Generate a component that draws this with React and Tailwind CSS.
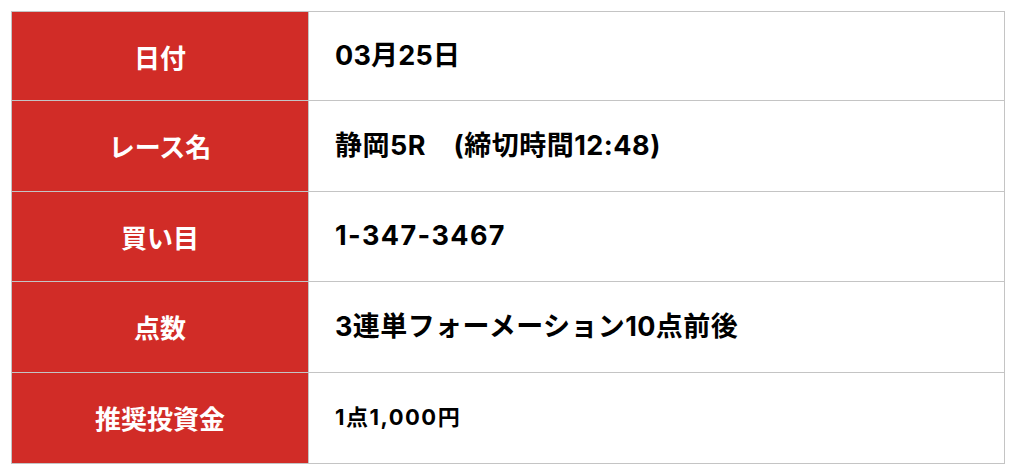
export default function App() {
  const rows = [
    { label: "日付", value: "03月25日", h: "h-[89px]", t: "text-[27px] tracking-[0.2px]" },
    { label: "レース名", value: "静岡5R　(締切時間12:48)", h: "h-[90.5px]", t: "text-[27px] tracking-[0.5px]" },
    { label: "買い目", value: "1-347-3467", h: "h-[90.5px]", t: "text-[27px] tracking-[1.4px]" },
    { label: "点数", value: "3連単フォーメーション10点前後", h: "h-[90.5px]", t: "text-[27px] tracking-[0.4px]" },
    { label: "推奨投資金", value: "1点1,000円", h: "h-[90.5px]", t: "text-[22px] tracking-[1.5px]" },
  ];
  return (
    <div className="w-[1024px] h-[476px] bg-white pt-[11px] pl-[11px]">
      <div className="w-[994px] border border-[#c4c4c4] flex flex-col divide-y divide-[#c4c4c4]">
        {rows.map((r, i) => (
          <div key={i} className={`flex ${r.h}`}>
            <div
              className="w-[297px] shrink-0 bg-[#d12c27] border-r border-[#c4c4c4] flex items-center justify-center text-white font-bold text-[26px]"
              style={{ fontFamily: '"Noto Sans CJK JP", sans-serif' }}
            >
              {r.label}
            </div>
            <div
              className={`flex-1 flex items-center pl-[26px] text-black font-bold ${r.t}`}
              style={{ fontFamily: 'Inter, "Noto Sans CJK JP", sans-serif' }}
            >
              {r.value}
            </div>
          </div>
        ))}
      </div>
    </div>
  );
}
